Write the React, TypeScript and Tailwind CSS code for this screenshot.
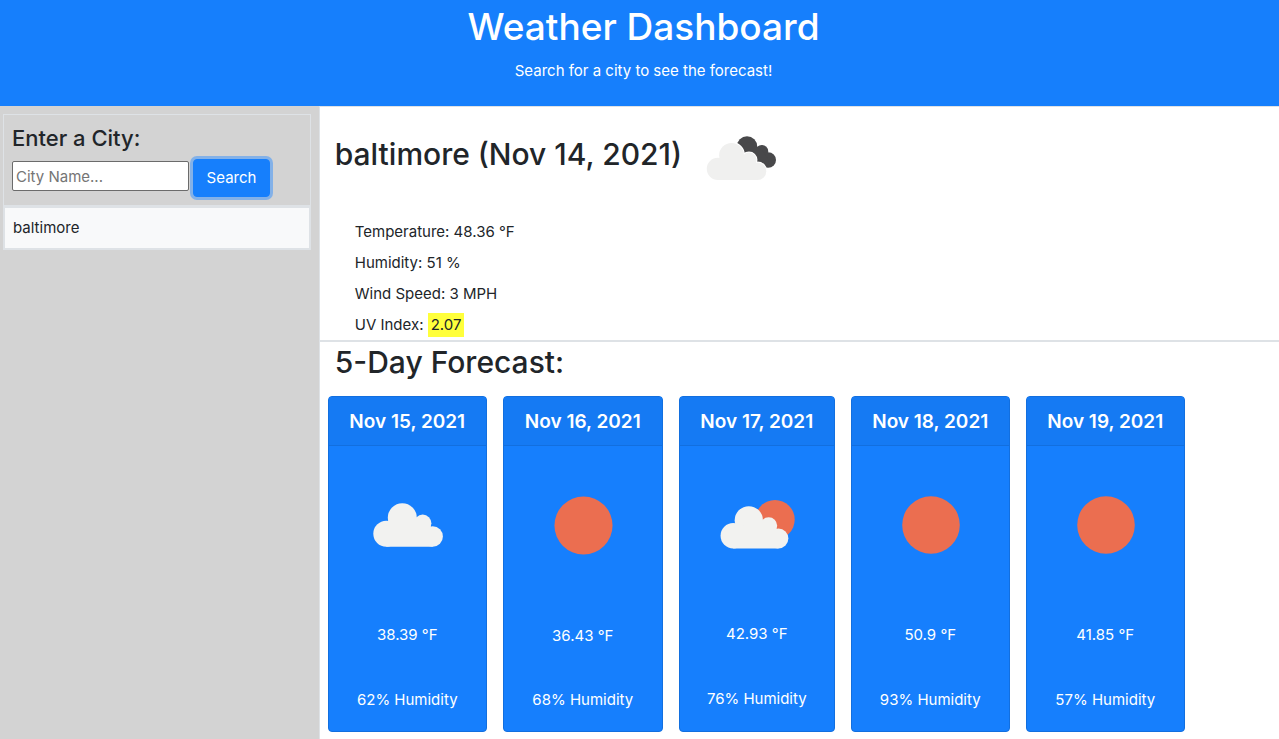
import { useState } from "react";

type Sky = "cloud" | "sun" | "partly" | "broken";

type Day = { date: string; sky: Sky; temp: string; humidity: number; width: string };

const days: Day[] = [
  { date: "Nov 15, 2021", sky: "cloud", temp: "38.39", humidity: 62, width: "w-[159px]" },
  { date: "Nov 16, 2021", sky: "sun", temp: "36.43", humidity: 68, width: "w-[160px]" },
  { date: "Nov 17, 2021", sky: "partly", temp: "42.93", humidity: 76, width: "w-[156px]" },
  { date: "Nov 18, 2021", sky: "sun", temp: "50.9", humidity: 93, width: "w-[159px]" },
  { date: "Nov 19, 2021", sky: "sun", temp: "41.85", humidity: 57, width: "w-[159px]" },
];

function CloudShape() {
  return (
    <>
      <circle cx="37.3" cy="67.7" r="13" />
      <circle cx="53.3" cy="51.8" r="14.5" />
      <circle cx="73.7" cy="57.3" r="8.7" />
      <circle cx="83.7" cy="70.5" r="10.2" />
      <path d="M37.3 80.7H83.7V62L73.7 55H53L37.3 60Z" />
    </>
  );
}

function SkyIcon({ sky, className }: { sky: Sky; className: string }) {
  return (
    <svg viewBox="0 0 117 117" className={className} role="img" aria-label={sky}>
      {sky === "sun" && <circle cx="59" cy="59" r="28.8" fill="#eb6e50" />}
      {sky === "cloud" && (
        <g fill="#f2f2f0">
          <CloudShape />
        </g>
      )}
      {sky === "partly" && (
        <>
          <circle cx="77" cy="54" r="20.2" fill="#eb6e50" />
          <g fill="#f2f2f0" transform="translate(-3.2 2.9)">
            <CloudShape />
          </g>
        </>
      )}
      {sky === "broken" && (
        <>
          <g fill="#48484a">
            <circle cx="71.4" cy="41.4" r="11.9" />
            <circle cx="88.7" cy="47.2" r="7.5" />
            <circle cx="96.2" cy="57.4" r="9.1" />
            <path d="M62 48L72 36L89 46L97 58L95 66L84 62Z" />
          </g>
          <g fill="#ffffff" stroke="#ffffff" strokeWidth="2.4">
            <CloudShape />
          </g>
          <g fill="#f0f0ef">
            <CloudShape />
          </g>
        </>
      )}
    </svg>
  );
}

function ForecastCard({ day }: { day: Day }) {
  return (
    <article
      className={`${day.width} flex shrink-0 flex-col rounded border border-[#126fdf] bg-[#167ffd] text-center text-white`}
    >
      <h3 className="border-b border-[#126fdf] bg-[#157af3] pt-[13px] pb-[11px] text-[19px] leading-6 font-semibold whitespace-nowrap">
        {day.date}
      </h3>
      <div className="flex flex-1 flex-col justify-around px-5 pt-5 pb-[19px]">
        <SkyIcon sky={day.sky} className="w-full" />
        <p className="mt-10 whitespace-nowrap">{day.temp} °F</p>
        <p className="mt-10 whitespace-nowrap">{day.humidity}% Humidity</p>
      </div>
    </article>
  );
}

export default function App() {
  const [city, setCity] = useState("");

  return (
    <div className="flex min-h-screen flex-col bg-white font-['Inter','Liberation_Sans',sans-serif] text-[15px] leading-6 text-[#212529]">
      <header className="bg-[#167ffc] pt-[3px] pb-[23px] pl-2 text-center text-white">
        <h1 className="mb-2 text-[37px] leading-12 font-medium">Weather Dashboard</h1>
        <p>Search for a city to see the forecast!</p>
      </header>

      <div className="flex flex-1">
        <aside className="w-1/4 shrink-0 border-r border-[#dee2e6] bg-[#d3d3d3] py-2 pr-2 pl-[3px]">
          <form
            className="border border-[#dee2e6] p-2"
            onSubmit={(event) => event.preventDefault()}
          >
            <label htmlFor="city" className="mb-1.5 block text-[22px] leading-[30px] font-medium">
              Enter a City:
            </label>
            <div className="flex items-start gap-1">
              <input
                id="city"
                type="text"
                value={city}
                onChange={(event) => setCity(event.target.value)}
                placeholder="City Name..."
                className="mt-0.5 h-[30px] w-[177px] rounded-[2px] border border-[#6b6b6b] bg-white px-[3px] outline-none placeholder:text-[#757575]"
              />
              <button
                type="submit"
                className="h-[38px] w-[77px] rounded border border-[#167ffc] bg-[#167ffc] text-white ring-3 ring-[#83b1e8]"
              >
                Search
              </button>
            </div>
          </form>
          <ul>
            <li className="border-2 border-[#dee2e6] bg-[#f8f9fa]">
              <button type="button" className="block w-full px-2 py-2 text-left">
                baltimore
              </button>
            </li>
          </ul>
        </aside>

        <main className="min-w-0 flex-1">
          <section className="border-t border-b-2 border-t-[#dee2e6] border-b-[#dee2e6] pt-1 pb-[3px]">
            <div className="flex items-start gap-1 pl-[15px]">
              <h2 className="pt-6 text-[30px] leading-[38px] font-medium">baltimore (Nov 14, 2021)</h2>
              <SkyIcon sky="broken" className="size-[100px]" />
            </div>
            <ul className="flex flex-col gap-[7px] pt-[9px] pl-[35px]">
              <li>Temperature: 48.36 °F</li>
              <li>Humidity: 51 %</li>
              <li>Wind Speed: 3 MPH</li>
              <li>
                UV Index: <span className="inline-block bg-[#ffff3b] px-[3px]">2.07</span>
              </li>
            </ul>
          </section>

          <section className="pb-[7px]">
            <h2 className="pt-px pl-[15px] text-[30px] leading-[38px] font-medium">5-Day Forecast:</h2>
            <div className="flex gap-4 pt-[15px] pl-2">
              {days.map((day) => (
                <ForecastCard key={day.date} day={day} />
              ))}
            </div>
          </section>
        </main>
      </div>
    </div>
  );
}
